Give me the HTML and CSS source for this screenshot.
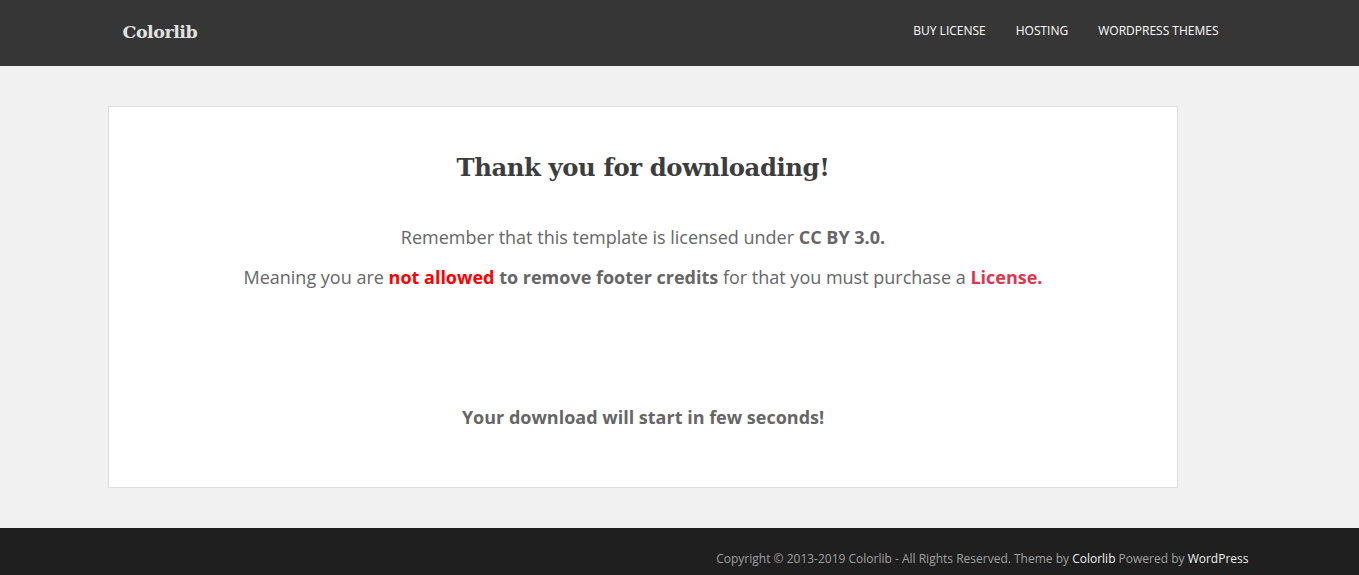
FILE: index.html
```html
<!DOCTYPE html>
<html>
<head>
<meta charset="utf-8">
<link rel="stylesheet" href="styles.css">
</head>
<body>
<header class="topbar">
  <div class="container topbar-inner">
    <a class="logo" href="#">Colorlib</a>
    <nav class="nav">
      <a href="#">BUY LICENSE</a>
      <a href="#">HOSTING</a>
      <a href="#">WORDPRESS THEMES</a>
    </nav>
  </div>
</header>
<main class="main">
  <div class="container">
    <div class="card">
      <h1 class="title">Thank you for downloading!</h1>
      <p class="line">Remember that this template is licensed under <strong>CC BY 3.0.</strong></p>
      <p class="line">Meaning you are <strong class="red">not allowed</strong> <strong>to remove footer credits</strong> for that you must purchase a <a class="lic" href="#">License.</a></p>
      <p class="start">Your download will start in few seconds!</p>
    </div>
  </div>
</main>
<footer class="footer">
  <div class="container footer-inner">
    <span>Copyright © 2013-2019 Colorlib - All Rights Reserved. Theme by <a href="#">Colorlib</a> Powered by <a href="#">WordPress</a></span>
  </div>
</footer>
</body>
</html>
```
FILE: styles.css
```css
html, body {
  margin: 0;
  padding: 0;
}
body {
  background: #f1f1f1;
  font-family: "Open Sans", "Liberation Sans", sans-serif;
  color: #666;
}
a { text-decoration: none; }
.container {
  width: 1170px;
  margin: 0 auto;
  box-sizing: border-box;
}
.topbar {
  background: #363636;
  height: 66px;
}
.topbar-inner {
  display: flex;
  align-items: center;
  justify-content: space-between;
  height: 66px;
  padding: 0 46px 0 28px;
}
.logo {
  font-family: "DejaVu Serif", serif;
  font-weight: bold;
  font-size: 17.5px;
  color: #e2e2e2;
  letter-spacing: -0.5px;
  margin-top: -3px;
}
.nav {
  display: flex;
  gap: 30px;
  margin-top: -5px;
}
.nav a {
  font-size: 12px;
  color: #fff;
}
.main {
  padding: 40px 0 40px;
}
.main .container {
  padding-left: 13.5px;
}
.card {
  width: 1070px;
  box-sizing: border-box;
  background: #fff;
  border: 1px solid #ddd;
  text-align: center;
  padding: 43px 20px 57px;
  height: 382px;
}
.title {
  font-family: "DejaVu Serif", serif;
  font-weight: bold;
  font-size: 24.3px;
  color: #3d3d3d;
  margin: 0 0 38px;
  line-height: 36px;
  letter-spacing: -0.4px;
}
.line {
  font-size: 18px;
  line-height: 26px;
  margin: 0 0 14px;
}
.line strong { font-weight: bold; color: #666; }
.line strong.red { color: #ff0000; }
.lic { color: #dd3750; font-weight: bold; }
.start {
  font-size: 18px;
  font-weight: bold;
  margin: 114px 0 0;
  line-height: 26px;
}
.footer {
  background: #1f1f1f;
  height: 47px;
}
.footer-inner {
  display: flex;
  justify-content: flex-end;
  padding: 22px 16px 0 0;
  font-size: 12px;
  color: #a0a0a0;
}
.footer a { color: #f0f0f0; }
```
